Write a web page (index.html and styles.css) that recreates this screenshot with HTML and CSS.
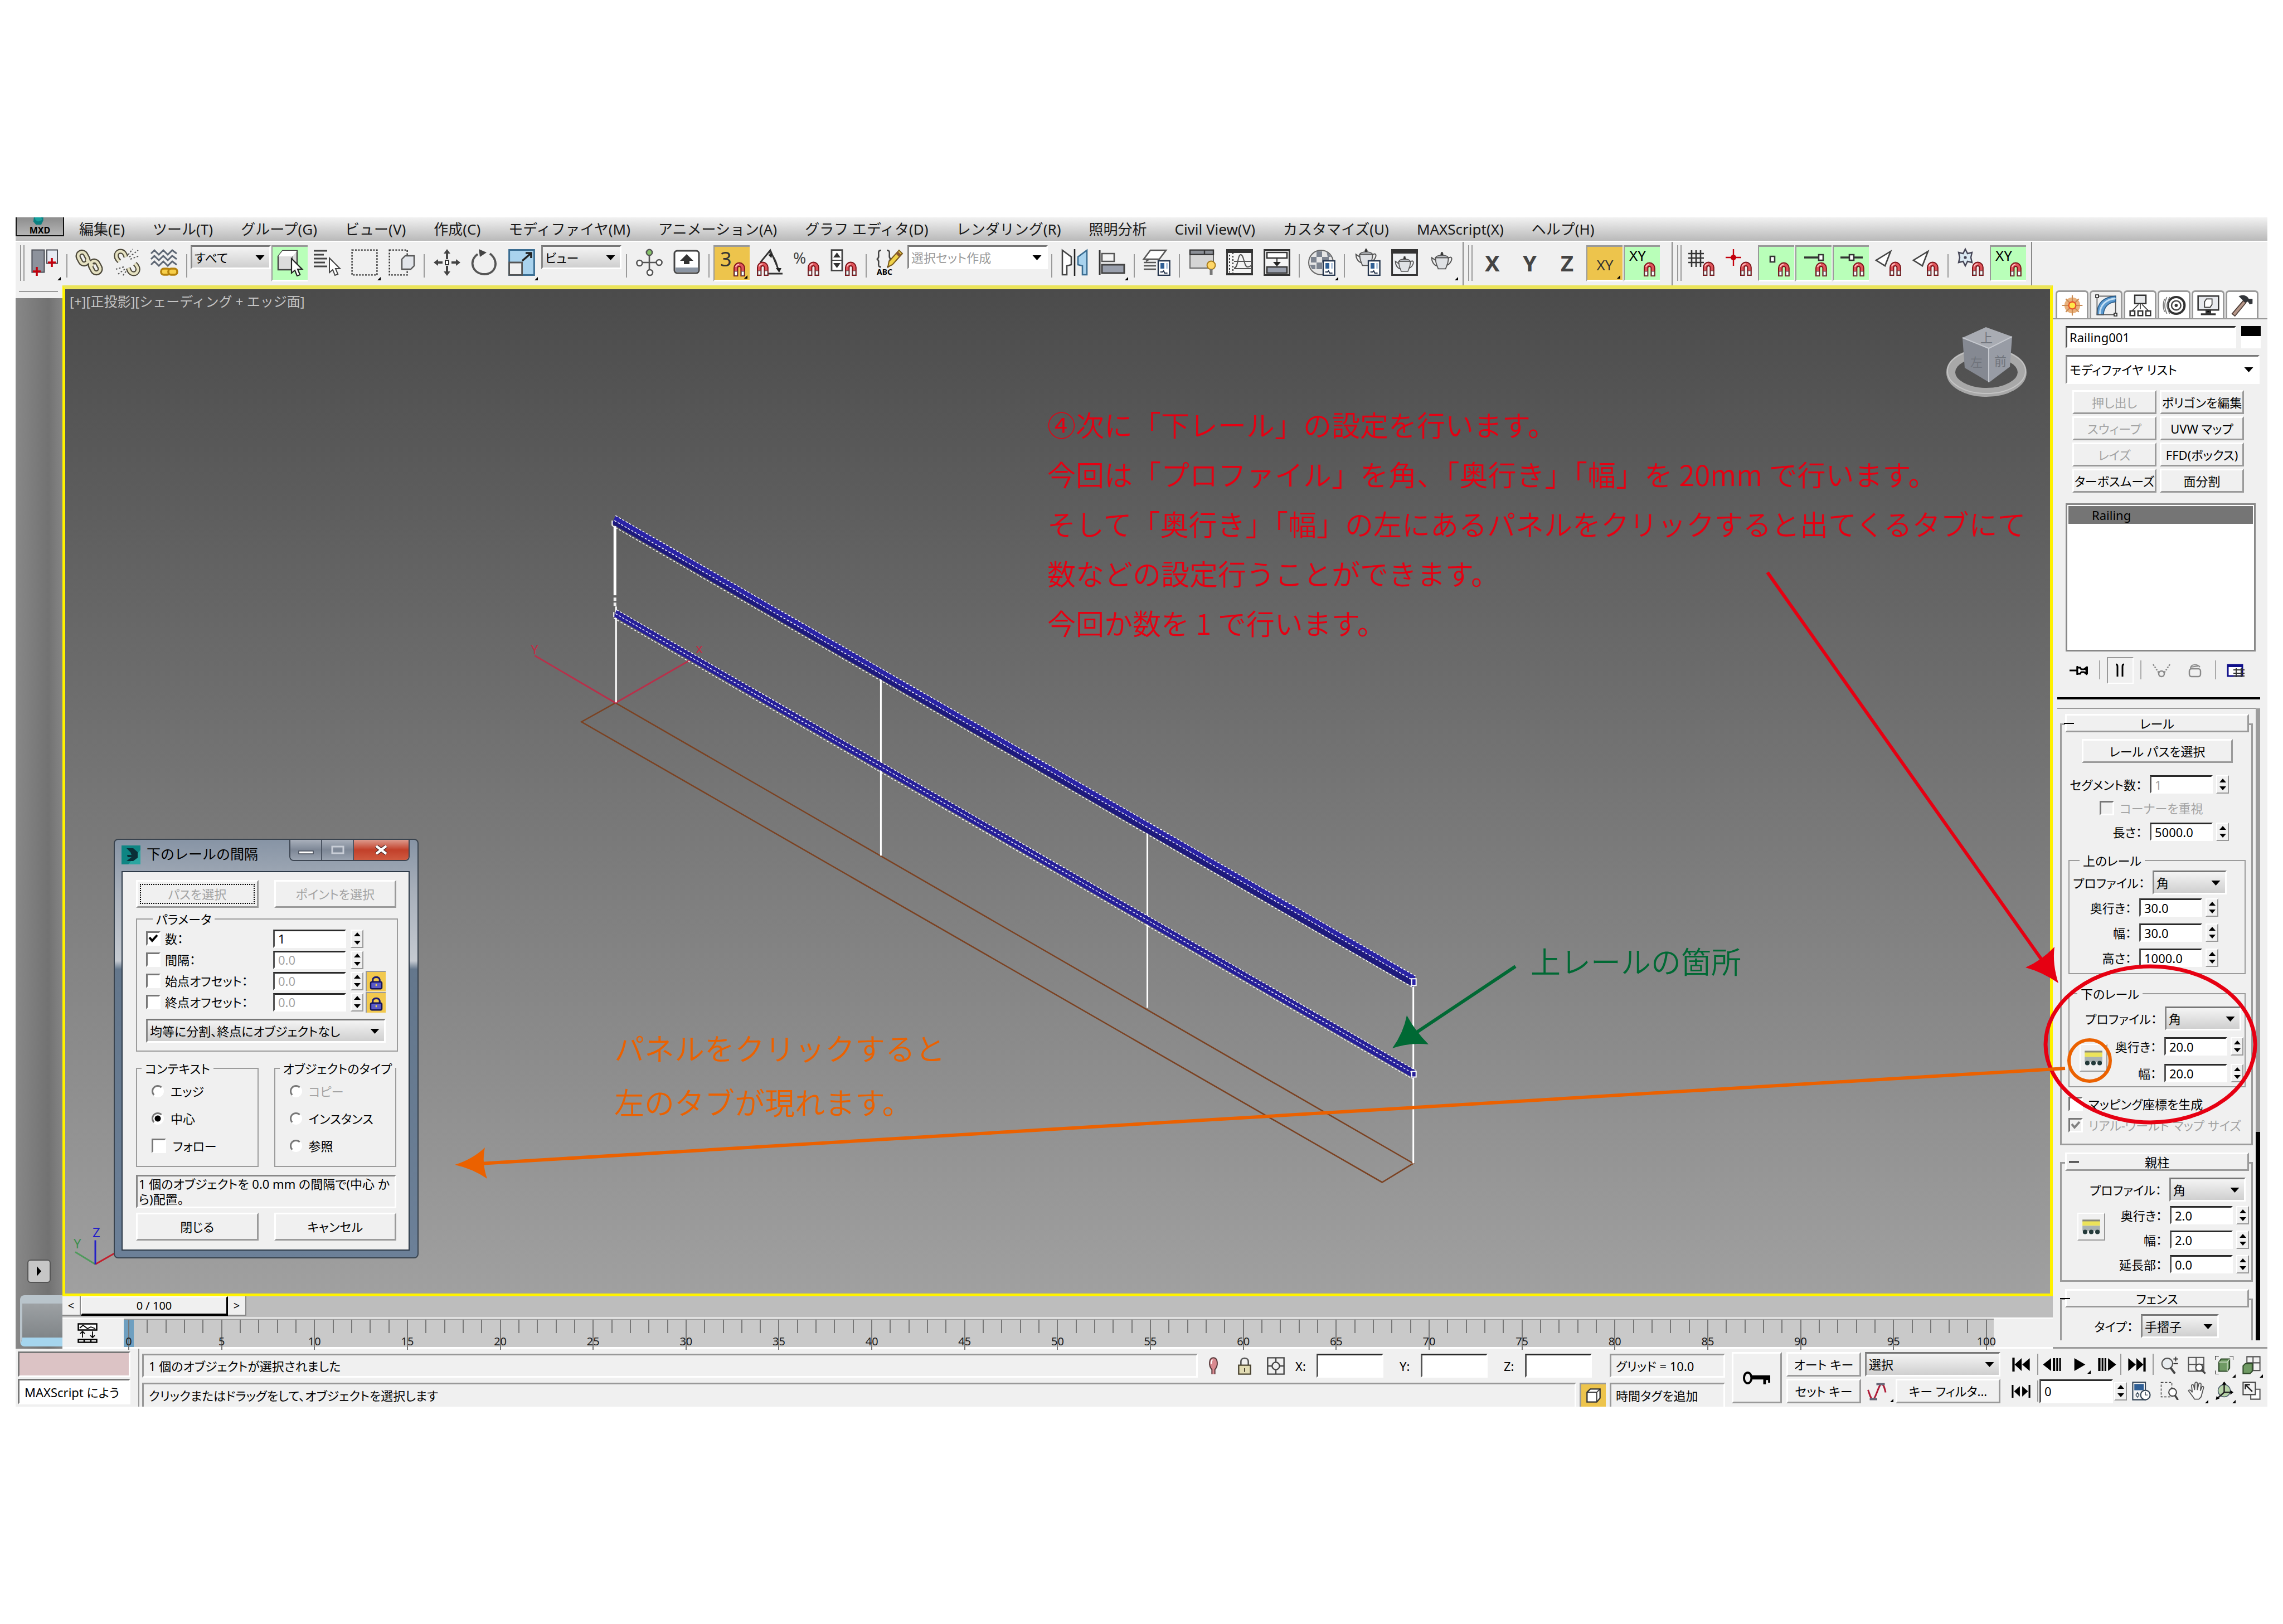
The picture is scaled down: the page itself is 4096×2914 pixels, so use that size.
FILE: index.html
```html
<!DOCTYPE html>
<html lang="ja">
<head>
  <meta charset="UTF-8">
  <meta name="viewport" content="width=device-width, initial-scale=1.0">
  <title>Railing001 - 下のレールの設定</title>
  <link rel="stylesheet" href="styles.css">
</head>
<body>
  <!-- Shared icon parts -->
  <svg class="defs" aria-hidden="true">
    <symbol id="magnet" viewBox="0 0 24 24">
      <path d="M13.5 23.5v-7a4.7 4.7 0 0 1 9.4 0v7h-3.2v-7a1.5 1.5 0 0 0-3 0v7z" fill="#e0555c" stroke="#7c1218" stroke-width="1"/>
      <path d="M14 19.5h2.4v3.6H14zM20.1 19.5h2.4v3.6h-2.4z" fill="#fff" stroke="#555" stroke-width=".5"/>
      <path d="M15 15.5a3.3 3.3 0 0 1 3-2.3" stroke="#ffc4c4" stroke-width="1" fill="none"/>
    </symbol>
    <symbol id="teapot" viewBox="0 0 24 24">
      <path d="M5 8c0 7 3 11 3 12h8c0-1 3-5 3-12z" fill="#dfe1e4" stroke="#555" stroke-width="1.1"/>
      <path d="M5 8h14c-1-2-4-2.600-7-2.600S6 6 5 8z" fill="#b9bcc1" stroke="#555"/>
      <path d="M12 2v3M10.500 4.500h3" stroke="#333" stroke-width="2"/>
      <path d="M5.500 11L1 8c0 4 2 8 6 9M18.500 9c3-3 5-1 3.500 2.500S18 16 17 16" fill="none" stroke="#555" stroke-width="1.200"/>
    </symbol>
    <symbol id="slate" viewBox="0 0 24 24">
      <path d="M13 10.500h10.300v13H13z" fill="#fff" stroke="#25354d" stroke-width="1.200"/>
      <path d="M15 12.500h3.500v5H15z" fill="#2f5f95"/>
      <path d="M20 12.500h1.800v5H20z" fill="#b8cbe2"/>
      <path d="M14.800 20.500h2l1-1 1 2h2.500" stroke="#25354d" fill="none"/>
    </symbol>
    <symbol id="cursor" viewBox="0 0 24 24">
      <path d="M13 8v13l3-2.500 2 5 2.600-1-2.100-5h4z" fill="#fff" stroke="#222" stroke-width="1.100"/>
    </symbol>
    <symbol id="spacing" viewBox="0 0 24 24">
      <path d="M2 4h20v3H2z" fill="#8a8a7a"/><path d="M2 6h20v5H2z" fill="#ece35a"/><path d="M2 11h20v6H2z" fill="#aab2b2"/>
      <circle cx="5" cy="18" r="2.600" fill="#243a3a"/><circle cx="12" cy="18" r="2.600" fill="#243a3a"/><circle cx="19" cy="18" r="2.600" fill="#243a3a"/>
    </symbol>
    <symbol id="padlock" viewBox="0 0 24 24">
      <path d="M7 12V8c0-5 10-5 10 0v4" fill="none" stroke="#191970" stroke-width="2.500"/>
      <rect x="4" y="11" width="16" height="10" rx="2" fill="#5a5ac8" stroke="#14145a" stroke-width="2"/>
      <path d="M12 14v3" stroke="#e8d050" stroke-width="2"/>
    </symbol>
  </svg>

  <main class="app">
    <!-- Menu bar -->
    <nav class="menubar">
      <button class="app-button" aria-label="MXD">
        <svg viewBox="0 0 40 16"><path d="M8 0h18v6l-4 8H12L7 8z" fill="#0c7f80"/><path d="M10 0h12l2 5-8 3-5-3z" fill="#18a29f"/></svg>
        MXD
      </button>
      <a href="#">編集(E)</a>
      <a href="#">ツール(T)</a>
      <a href="#">グループ(G)</a>
      <a href="#">ビュー(V)</a>
      <a href="#">作成(C)</a>
      <a href="#">モディファイヤ(M)</a>
      <a href="#">アニメーション(A)</a>
      <a href="#">グラフ エディタ(D)</a>
      <a href="#">レンダリング(R)</a>
      <a href="#">照明分析</a>
      <a href="#">Civil View(V)</a>
      <a href="#">カスタマイズ(U)</a>
      <a href="#">MAXScript(X)</a>
      <a href="#">ヘルプ(H)</a>
    </nav>

    <!-- Toolbars -->
    <div class="toolbars">
      <div class="toolbar">
        <button class="tool fly" aria-label="元に戻す"><svg viewBox="0 0 24 24"><path d="M.700.700h11v20h-11z" fill="#8d929c" stroke="#4a4d55"/><path d="M14 .700h9.500v12H14z" fill="#e6eaf2" stroke="#4a4d55"/><path d="M5 16v8M1.500 20h7M18.500 8v8M15 12h7" stroke="#c4000c" stroke-width="1.800"/></svg></button>
        <i class="sep"></i>
        <button class="tool" aria-label="リンク"><svg viewBox="0 0 24 24" fill="none"><g stroke="#4b4738" stroke-width="4.600"><rect x="2.500" y="2.500" width="7" height="11" rx="3.500" transform="rotate(-28 6 8)"/><rect x="13.500" y="10.500" width="7" height="11" rx="3.500" transform="rotate(-28 17 16)"/><path d="M9 9l6 6"/></g><g stroke="#e6e2c2" stroke-width="2.400"><rect x="2.500" y="2.500" width="7" height="11" rx="3.500" transform="rotate(-28 6 8)"/><rect x="13.500" y="10.500" width="7" height="11" rx="3.500" transform="rotate(-28 17 16)"/><path d="M9 9l6 6"/></g></svg></button>
        <button class="tool" aria-label="リンク解除"><svg viewBox="0 0 24 24" fill="none"><g stroke="#4b4738" stroke-width="4.400"><path d="M5 11C0 6 3 2 6 2s4 2 5 5M19 13c5 5 2 9-1 9s-4-2-5-5"/></g><g stroke="#e6e2c2" stroke-width="2.300"><path d="M5 11C0 6 3 2 6 2s4 2 5 5M19 13c5 5 2 9-1 9s-4-2-5-5"/></g><path d="M14 7l8-6M15 9l8-3M13 5l4-5M9 16l-7 2M10 18l-7 5M11 20l-3 4" stroke="#555" stroke-dasharray="1.500 1.500"/></svg></button>
        <button class="tool" aria-label="スペース ワープにバインド"><svg viewBox="0 0 24 24" fill="none"><path d="M0 4l3-3 4 4 4-4 4 4 4-4 4 3M0 9l3-3 4 4 4-4 4 4 4-4 4 3M0 14l3-3 4 4 4-4 4 4 4-4 4 3" stroke="#5d6673" stroke-width="1.500"/><rect x="9" y="17.500" width="8" height="5.500" rx="2.500" stroke="#b5820c" stroke-width="1.800" fill="#f7cf4a"/><rect x="15.500" y="17.500" width="8" height="5.500" rx="2.500" stroke="#b5820c" stroke-width="1.800" fill="#f7cf4a"/></svg></button>
        <i class="sep"></i>
        <select class="combo" aria-label="選択フィルタ"><option>すべて</option></select>
        <button class="tool on-green" aria-label="オブジェクトを選択"><svg viewBox="0 0 24 24"><path d="M1 6l4-5h13v12l-4 5H1z" fill="#dcdcdc" stroke="#444" stroke-width="1.200"/><path d="M1 6l4-5h13l-4 5z" fill="#fff"/><path d="M14 6v12" stroke="#888"/><use href="#cursor"/></svg></button>
        <button class="tool" aria-label="名前で選択"><svg viewBox="0 0 24 24"><path d="M0 1.500h12M0 5h9M0 8.500h12M0 12h10M0 15.500h12" stroke="#444" stroke-width="1.500"/><path d="M14 8v13l3-2.500 2 5 2.600-1-2.100-5h4z" fill="#fff" stroke="#444"/></svg></button>
        <button class="tool fly" aria-label="矩形選択領域"><svg viewBox="0 0 24 24"><path d="M.800.800h22.400v22.400H.800z" fill="none" stroke="#333" stroke-width="1.200" stroke-dasharray="1.500 1.200"/></svg></button>
        <button class="tool" aria-label="ウィンドウ/交差"><svg viewBox="0 0 24 24"><path d="M.800.800h16v22.400H.800z" fill="none" stroke="#333" stroke-width="1.200" stroke-dasharray="1.500 1.200"/><path d="M12 9l3-3h8v9l-3 3h-8z" fill="#e2e5ea" stroke="#555" stroke-width="1.200"/></svg></button>
        <i class="sep"></i>
        <button class="tool" aria-label="選択して移動"><svg viewBox="0 0 24 24"><path d="M12 0l3 4h-2v5h-2V4H9zM12 24l-3-4h2v-5h2v5h2zM0 12l4-3v2h4v2H4v2zM24 12l-4 3v-2h-4v-2h4V9z" fill="#444"/><path d="M10.500 10h3v4h-3z" fill="#fff" stroke="#333"/></svg></button>
        <button class="tool" aria-label="選択して回転"><svg viewBox="0 0 24 24"><path d="M6 4.500C-3 11 2 22.500 12 22.500S26 11 17 4" fill="none" stroke="#555" stroke-width="1.900"/><path d="M7 0l7 3-6 4z" fill="#444"/></svg></button>
        <button class="tool fly" aria-label="選択してスケール"><svg viewBox="0 0 24 24"><path d="M.800.800h22.400v22.400H.800z" fill="#a9d3ee" stroke="#3a6d92" stroke-width="1.500"/><path d="M.800 12h11.500v11.200H.800z" fill="#f0f0f0" stroke="#555" stroke-width="1.400"/><path d="M12.500 10.500L20 4M15.500 3.500H20.500V8" fill="none" stroke="#222" stroke-width="1.800"/></svg></button>
        <select class="combo" aria-label="基準座標系"><option>ビュー</option></select>
        <i class="sep"></i>
        <button class="tool" aria-label="基点中心を使用"><svg viewBox="0 0 24 24" stroke="#555" stroke-width="1.300"><path d="M12 5v14M5 12h14"/><circle cx="12" cy="3" r="2.600" fill="#86c36a"/><circle cx="3.200" cy="12.500" r="2.500" fill="#fff"/><circle cx="20.800" cy="12" r="2.500" fill="#fff"/><circle cx="12.500" cy="21" r="2.500" fill="#fff"/></svg></button>
        <button class="tool" aria-label="マニピュレート"><svg viewBox="0 0 24 24"><rect x="1" y="1.500" width="22" height="20" rx="2.500" fill="#fff" stroke="#444" stroke-width="1.500"/><path d="M2 16.500h20v4H2z" fill="#8b95a3"/><path d="M12 4.500l6 6h-3.500v3h-5v-3H6z" fill="#333"/></svg></button>
        <i class="sep"></i>
        <button class="tool on-gold fly" aria-label="スナップ切り替え"><svg viewBox="0 0 24 24"><text x="1" y="15" class="g20">3</text><use href="#magnet"/></svg></button>
        <button class="tool" aria-label="角度スナップ"><svg viewBox="0 0 24 24"><path d="M4 12L13 1l8 19M11 22h13" fill="none" stroke="#333" stroke-width="1.400"/><path d="M12 3c5 3 7 10 8 15" fill="none" stroke="#333"/><path d="M18 17h5l-2 4zM11 5l4-1-1 4z" fill="#222"/><use href="#magnet" x="-12"/></svg></button>
        <button class="tool" aria-label="パーセント スナップ"><svg viewBox="0 0 24 24"><text x="0" y="13" class="g17">%</text><use href="#magnet"/></svg></button>
        <button class="tool" aria-label="スピナー スナップ"><svg viewBox="0 0 24 24"><path d="M1 .800h9.500v18.400H1z" fill="#fff" stroke="#444" stroke-width="1.400"/><path d="M1 10h9.500" stroke="#444"/><path d="M5.800 3l3.200 4.500H2.500zM5.800 17l3.200-4.500H2.500z" fill="#333"/><use href="#magnet"/></svg></button>
        <i class="sep"></i>
        <button class="tool" aria-label="名前付き選択セットを編集"><svg viewBox="0 0 24 24"><path d="M5 1C0 1 5 8 1 9c4 1-1 7 4 7M10 1c5 0 0 7 4 8-4 1 1 7-4 7" fill="none" stroke="#444" stroke-width="1.300"/><path d="M21 1l3 3-9 10-4 2 1-5z" fill="#f0d24a" stroke="#7a5a1a"/><path d="M20 2l3 3-2 2-3-3z" fill="#8a5a30"/><text x="1" y="23" class="g8">ABC</text></svg></button>
        <select class="combo set" aria-label="名前付き選択セット"><option>選択セット作成</option></select>
        <i class="sep"></i>
        <button class="tool" aria-label="ミラー"><svg viewBox="0 0 24 24"><path d="M12 0v24" stroke="#222" stroke-width="1.300"/><path d="M1 1l8 6v7l-4 1v8H1z" fill="#fff" stroke="#444" stroke-width="1.300"/><path d="M23 1l-8 6v7l4 1v8h4z" fill="#a9d3ee" stroke="#3a6d92" stroke-width="1.300"/></svg></button>
        <button class="tool fly" aria-label="位置合わせ"><svg viewBox="0 0 24 24"><path d="M1 1v22" stroke="#333" stroke-width="1.500"/><path d="M3 4h11v7H3z" fill="#f4f4f4" stroke="#555" stroke-width="1.300"/><path d="M3 14h20v7.500H3z" fill="#9aa0ad" stroke="#444" stroke-width="1.500"/></svg></button>
        <i class="sep"></i>
        <button class="tool" aria-label="レイヤ マネージャ"><svg viewBox="0 0 24 24"><path d="M6 1h14l-6 8H0zM0 12h11M0 15h11M0 18h11M2 11l3-2" fill="#fff" stroke="#555" stroke-width="1.300"/><use href="#slate"/></svg></button>
        <i class="sep"></i>
        <button class="tool" aria-label="リボン切り替え"><svg viewBox="0 0 24 24"><path d="M1 4h21v13H1z" fill="#d5d5d5" stroke="#666"/><path d="M1 .800h13v4H1zM14 .800h8v4h-8z" fill="#8b8f96" stroke="#333" stroke-width="1.200"/><circle cx="20" cy="14.500" r="3.700" fill="#ffd767" stroke="#a87a18"/><path d="M20 18v5" stroke="#777" stroke-width="2.500"/></svg></button>
        <button class="tool" aria-label="カーブ エディタ"><svg viewBox="0 0 24 24"><path d="M.800.800h22.400v22H.800z" fill="#f5f5f5" stroke="#333" stroke-width="1.500"/><path d="M0 0h24v3.500H0zM0 21.500h24v2H0z" fill="#333"/><path d="M6 3v19M3 5v16" stroke="#333" stroke-dasharray="1.500 1.500"/><path d="M7 17c4 0 3-12 6-12s3 11 6 11 3-1 4-2M7 11h16M7 17.500h16" fill="none" stroke="#555"/></svg></button>
        <button class="tool" aria-label="スケマティック ビュー"><svg viewBox="0 0 24 24"><path d="M.800.800h22.400v22.400H.800z" fill="#f5f5f5" stroke="#333" stroke-width="1.500"/><path d="M3 3h18v5H3z" fill="#fff" stroke="#333" stroke-width="1.300"/><path d="M3 16h18v5.500H3z" fill="#9aa0ad" stroke="#333" stroke-width="1.300"/><path d="M12 8v5" stroke="#333"/><path d="M8.500 11.500h7L12 15.500z" fill="#222"/></svg></button>
        <i class="sep"></i>
        <button class="tool fly" aria-label="マテリアル エディタ"><svg viewBox="0 0 24 24"><circle cx="11" cy="12" r="11" fill="#e6e6e6" stroke="#666"/><path d="M7 2h5v5H7zM2 7h5v5H2zM12 7h6v5h-6zM7 12h5v6H7zM16 2l4 5h-3zM1 14h5v4H3z" fill="#7d8490"/><use href="#slate"/></svg></button>
        <i class="sep"></i>
        <button class="tool" aria-label="レンダリング設定"><svg viewBox="0 0 24 24"><use href="#teapot" y="-2" width="22" height="20"/><use href="#slate"/></svg></button>
        <button class="tool" aria-label="レンダー フレーム ウィンドウ"><svg viewBox="0 0 24 24"><path d="M.800.800h22.400v22.400H.800z" fill="#eef0f2" stroke="#333" stroke-width="1.500"/><path d="M0 0h24v4H0z" fill="#333"/><use href="#teapot" x="2" y="5" width="20" height="18"/></svg></button>
        <button class="tool fly" aria-label="レンダリング"><svg viewBox="0 0 24 24"><use href="#teapot" x="1" y="1" width="22" height="20"/></svg></button>
      </div>
      <div class="toolbar axes">
        <button class="tool letter">X</button>
        <button class="tool letter">Y</button>
        <button class="tool letter">Z</button>
        <button class="tool on-gold fly xy">XY</button>
        <button class="tool on-green" aria-label="XY スナップ"><svg viewBox="0 0 24 24"><text x="0" y="10" class="g12">XY</text><use href="#magnet"/></svg></button>
      </div>
      <div class="toolbar snaps">
        <button class="tool" aria-label="グリッド スナップ"><svg viewBox="0 0 24 24"><path d="M3 1v15M7 1v15M11 1v15M0 4h14M0 8h14M0 12h14" stroke="#333" stroke-width="1.300"/><use href="#magnet"/></svg></button>
        <button class="tool" aria-label="基点スナップ"><svg viewBox="0 0 24 24"><path d="M7 0v15M0 7.500h14" stroke="#c4000c" stroke-width="1.200"/><circle cx="7" cy="7.500" r="2.500" fill="#c4000c"/><use href="#magnet"/></svg></button>
        <button class="tool on-green" aria-label="頂点スナップ"><svg viewBox="0 0 24 24"><path d="M6 6h4v5H6z" fill="#fff" stroke="#333" stroke-width="1.300"/><use href="#magnet"/></svg></button>
        <button class="tool on-green" aria-label="端点スナップ"><svg viewBox="0 0 24 24"><path d="M3 7h14" stroke="#333" stroke-width="1.800"/><path d="M16 4.500h4v5h-4z" fill="#fff" stroke="#333" stroke-width="1.300"/><use href="#magnet"/></svg></button>
        <button class="tool on-green" aria-label="中点スナップ"><svg viewBox="0 0 24 24"><path d="M2 7h20" stroke="#333" stroke-width="1.800"/><path d="M10 4.500h4v5h-4z" fill="#fff" stroke="#333" stroke-width="1.300"/><use href="#magnet"/></svg></button>
        <button class="tool" aria-label="面スナップ"><svg viewBox="0 0 24 24"><path d="M14 2L1 10l8 5z" fill="#fff" stroke="#444" stroke-width="1.300"/><use href="#magnet"/></svg></button>
        <button class="tool" aria-label="面中心スナップ"><svg viewBox="0 0 24 24"><path d="M14 2L1 10l8 5z" fill="#fff" stroke="#444" stroke-width="1.300"/><use href="#magnet"/></svg></button>
        <i class="sep"></i>
        <button class="tool" aria-label="フリーズ スナップ"><svg viewBox="0 0 24 24"><path d="M7 0l2 4 4-1-1 4.500 1 4.500-4-1-2 4-2-4-4 1 1-4.500L1 3l4 1z" fill="#dbe9f2" stroke="#445" stroke-width="1.200"/><circle cx="7" cy="7.500" r="1.300" fill="#445"/><use href="#magnet"/></svg></button>
        <button class="tool on-green" aria-label="軸拘束スナップ"><svg viewBox="0 0 24 24"><text x="0" y="10" class="g12">XY</text><use href="#magnet"/></svg></button>
      </div>
    </div>

    <div class="workspace">
      <!-- Viewport layout bar -->
      <aside class="layoutbar">
        <div class="grip"></div>
        <button class="expand" aria-label="レイアウト タブを展開"></button>
        <button class="layout-tab" aria-label="ビューポート レイアウト"></button>
      </aside>

      <div class="center">
        <section class="viewport">
          <svg class="scene" viewBox="117 519 3560 1801" aria-label="手すりのモデル">
            <!-- Floor outline and gizmo -->
            <path d="M1104 1261L1043 1295L2479 2121L2535 2087Z" fill="none" stroke="#7b4222" stroke-width="2.500"/>
            <path d="M959 1176L1104 1261L1245 1180" fill="none" stroke="#b8304a" stroke-width="3"/>
            <text x="952" y="1174" class="axis red">Y</text>
            <text x="1248" y="1172" class="axis red">x</text>
            <!-- Posts -->
            <path d="M1103 944V1068" stroke="#fff" stroke-width="5"/>
            <path d="M1103 1072V1090" stroke="#eee" stroke-width="5" stroke-dasharray="6 3"/>
            <path d="M1105 1088V1260M1580 1217V1535M2058 1494V1808M2535 1761V2087" stroke="#fff" stroke-width="3"/>
            <!-- Top rail -->
            <path d="M1098 940L1104 925L2539 1751L2535 1770Z" fill="#2a23a6"/>
            <path d="M1098 940L1102 934L2537 1760L2535 1771Z" fill="#1e1a7c"/>
            <path d="M1104 925L2539 1751M1102 934L2537 1760M1098 943L2533 1771" fill="none" stroke="#fff" stroke-width="1.500" stroke-dasharray="4 3"/>
            <path d="M1098 934V943M2532 1756h8v12h-8z" fill="#2a23a6" stroke="#fff" stroke-width="2"/>
            <!-- Bottom rail -->
            <path d="M1101 1106L1106 1094L2539 1920L2535 1934Z" fill="#261f98"/>
            <path d="M1106 1094L2539 1920M1104 1101L2537 1927M1101 1109L2533 1935" fill="none" stroke="#fff" stroke-width="1.500" stroke-dasharray="4 3"/>
            <path d="M1101 1098V1107M2532 1922h8v10h-8z" fill="#261f98" stroke="#fff" stroke-width="2"/>
            <!-- World axis -->
            <path d="M171 2268L135 2246" stroke="#4f9a5c" stroke-width="3"/>
            <path d="M171 2268L206 2248" stroke="#c41e2c" stroke-width="3"/>
            <path d="M171 2268V2225" stroke="#2420c8" stroke-width="3"/>
            <text x="166" y="2220" class="axis blue">Z</text>
            <text x="132" y="2240" class="axis green">Y</text>
            <!-- View cube -->
            <ellipse cx="3563" cy="668" rx="64" ry="36" fill="none" stroke="#a8a8a8" stroke-width="16"/>
            <ellipse cx="3563" cy="666" rx="70" ry="40" fill="none" stroke="#c4c4c4" stroke-width="2"/>
            <path d="M3520 606L3562 587L3609 604L3567 625Z" fill="#a9acb3"/>
            <path d="M3520 606L3567 625L3568 686L3524 660Z" fill="#858992"/>
            <path d="M3567 625L3609 604L3605 658L3568 686Z" fill="#989ca5"/>
            <path d="M3520 606L3567 625L3609 604M3567 625V686" fill="none" stroke="#c6c9cf" stroke-width="2"/>
            <text x="3552" y="614" class="cube">上</text>
            <text x="3534" y="658" class="cube">左</text>
            <text x="3577" y="656" class="cube">前</text>
          </svg>

          <p class="view-label">[+][正投影][シェーディング + エッジ面]</p>

          <div class="note red">
            <p>④次に「下レール」の設定を行います。</p>
            <p>今回は「プロファイル」を角、「奥行き」「幅」を 20mm で行います。</p>
            <p>そして「奥行き」「幅」の左にあるパネルをクリックすると出てくるタブにて</p>
            <p>数などの設定行うことができます。</p>
            <p>今回か数を 1 で行います。</p>
          </div>
          <p class="note green">上レールの箇所</p>
          <div class="note orange">
            <p>パネルをクリックすると</p>
            <p>左のタブが現れます。</p>
          </div>

          <!-- Spacing dialog -->
          <form class="dialog">
            <header>
              <svg class="logo" viewBox="0 0 34 34"><rect width="34" height="34" fill="#2aa5a0"/><path d="M0 0h34v8L12 34H0z" fill="#0e8583"/><path d="M9 5h12l8 7v10l-8 6H9l9-7h-7l-1-4h8l-2-5z" fill="#0a2e36"/></svg>
              <h2>下のレールの間隔</h2>
              <div class="window-buttons">
                <button type="button" aria-label="最小化"><svg viewBox="0 0 30 18"><path d="M2 11h26v5H2z" fill="#fff" stroke="#444b58" stroke-width="1.500"/></svg></button>
                <button type="button" aria-label="最大化"><svg viewBox="0 0 30 18"><path d="M5 3h20v12H5z" fill="none" stroke="#c8cdd6" stroke-width="3"/></svg></button>
                <button type="button" class="close" aria-label="閉じる"><svg viewBox="0 0 30 18"><path d="M6 2l18 14M24 2L6 16" stroke="#4a2a2a" stroke-width="7"/><path d="M6 2l18 14M24 2L6 16" stroke="#fff" stroke-width="4.500"/></svg></button>
              </div>
            </header>
            <div class="client">
              <div class="pair">
                <button type="button" class="btn focus" disabled>パスを選択</button>
                <button type="button" class="btn" disabled>ポイントを選択</button>
              </div>
              <fieldset class="params">
                <legend>パラメータ</legend>
                <div class="param"><label><input type="checkbox" checked>数：</label><input type="text" value="1" aria-label="数"><span class="spin"><button type="button" aria-label="増"></button><button type="button" aria-label="減"></button></span></div>
                <div class="param"><label><input type="checkbox">間隔：</label><input type="text" value="0.0" disabled aria-label="間隔"><span class="spin"><button type="button" aria-label="増"></button><button type="button" aria-label="減"></button></span></div>
                <div class="param"><label><input type="checkbox">始点オフセット：</label><input type="text" value="0.0" disabled aria-label="始点オフセット"><span class="spin"><button type="button" aria-label="増"></button><button type="button" aria-label="減"></button></span><button type="button" class="lock" aria-label="始点をロック"><svg viewBox="0 0 24 24"><use href="#padlock"/></svg></button></div>
                <div class="param"><label><input type="checkbox">終点オフセット：</label><input type="text" value="0.0" disabled aria-label="終点オフセット"><span class="spin"><button type="button" aria-label="増"></button><button type="button" aria-label="減"></button></span><button type="button" class="lock" aria-label="終点をロック"><svg viewBox="0 0 24 24"><use href="#padlock"/></svg></button></div>
                <select class="combo" aria-label="分布"><option>均等に分割、終点にオブジェクトなし</option></select>
              </fieldset>
              <div class="pair">
                <fieldset class="choices">
                  <legend>コンテキスト</legend>
                  <label><input type="radio" name="context">エッジ</label>
                  <label><input type="radio" name="context" checked>中心</label>
                  <label><input type="checkbox">フォロー</label>
                </fieldset>
                <fieldset class="choices">
                  <legend>オブジェクトのタイプ</legend>
                  <label class="off"><input type="radio" name="type" disabled>コピー</label>
                  <label><input type="radio" name="type">インスタンス</label>
                  <label><input type="radio" name="type">参照</label>
                </fieldset>
              </div>
              <output class="summary">1 個のオブジェクトを 0.0 mm の間隔で(中心 か<br>ら)配置。</output>
              <div class="pair">
                <button type="button" class="btn">閉じる</button>
                <button type="button" class="btn">キャンセル</button>
              </div>
            </div>
          </form>
        </section>

        <!-- Time slider and track bar -->
        <div class="time-slider">
          <button class="step">&lt;</button>
          <button class="thumb">0 / 100</button>
          <button class="step">&gt;</button>
        </div>
        <div class="trackbar">
          <button class="mini-curve" aria-label="ミニ カーブ エディタを開く"><svg viewBox="0 0 36 36"><path d="M1.500 1.500h33v11h-33z" fill="#fff" stroke="#000" stroke-width="2.500"/><path d="M4 9l6-5 8 6 6-3 8 3" fill="none" stroke="#000" stroke-width="1.800"/><path d="M9 26V16M5 19l4-4 4 4M27 15v10M23 22l4 4 4-4" fill="none" stroke="#000" stroke-width="1.800"/><path d="M1.500 29.500h33v5h-33zM12 30v5M24 30v5" fill="#fff" stroke="#000" stroke-width="2.500"/></svg></button>
          <div class="track">
            <div class="ruler" id="ruler"></div>
          </div>
        </div>
      </div>

      <!-- Command panel -->
      <aside class="panel">
        <div class="tabs">
          <button aria-label="作成"><svg viewBox="0 0 24 24"><circle cx="12" cy="12" r="8.500" fill="#e9b07a"/><path d="M12 1v22M1 12h22M5 5l14 14M19 5L5 19" stroke="#c98a52" stroke-width="1.300"/><circle cx="12" cy="12" r="4.500" fill="#e8502a"/><circle cx="12" cy="12" r="3.200" fill="#ffe84a"/></svg></button>
          <button class="active" aria-label="修正"><svg viewBox="0 0 24 24"><path d="M2 2h20v20" fill="none" stroke="#555"/><path d="M2 22C2 8 10 3 22 2v6C14 9 9 14 9 22z" fill="#5b9ad0" stroke="#2a5d8c"/><path d="M5 22C5 11 12 5.500 22 4.500" fill="none" stroke="#c4e0f5" stroke-width="1.800"/><path d="M2 3v19h19" fill="none" stroke="#555"/><path d="M.600.600h3v3h-3zM20.400 20.400h3v3h-3z" fill="#fff" stroke="#222"/></svg></button>
          <button aria-label="階層"><svg viewBox="0 0 24 24"><path d="M6 1h12v9H6z" fill="#e6e8ea" stroke="#333" stroke-width="1.500"/><path d="M12 10v6M10 11l-7 7M14 11l7 7" stroke="#333"/><path d="M1 18h5v5H1zM9.500 18h5v5h-5zM18 18h5v5h-5z" fill="#fff" stroke="#333" stroke-width="1.500"/></svg></button>
          <button aria-label="モーション"><svg viewBox="0 0 24 24" fill="none"><circle cx="14" cy="12" r="9" stroke="#333" stroke-width="2.500"/><circle cx="14" cy="12" r="5" stroke="#444" stroke-width="1.500"/><circle cx="14" cy="12" r="1.700" fill="#333"/><path d="M4 3c-3 6-3 12 0 18M1.500 5c-2 5-2 9 0 14M7 3c-3 6-3 12 0 18" stroke="#777"/></svg></button>
          <button aria-label="表示"><svg viewBox="0 0 24 24"><path d="M1 2h22v15H1z" fill="#e8eaee" stroke="#333" stroke-width="1.500"/><path d="M8 8l2-3h6v6l-2 3H8z" fill="#fff" stroke="#333"/><path d="M10 17h4v3h-4zM4 21.500h16" stroke="#333" stroke-width="2"/></svg></button>
          <button aria-label="ユーティリティ"><svg viewBox="0 0 24 24"><path d="M13 7L1 21l3 2.500L16 9z" fill="#b59688" stroke="#4a3a34"/><path d="M8 2c5-2 9-1 11 3h4v5l-3 1-2-3-3 1-4-4z" fill="#33363a"/></svg></button>
        </div>

        <div class="panel-head">
          <div class="name-row">
            <input type="text" value="Railing001" aria-label="オブジェクト名">
            <button class="swatch" aria-label="オブジェクト カラー"></button>
          </div>
          <select class="combo white" aria-label="モディファイヤ リスト"><option>モディファイヤ リスト</option></select>
          <div class="modifier-buttons">
            <button class="btn" disabled>押し出し</button>
            <button class="btn">ポリゴンを編集</button>
            <button class="btn" disabled>スウィープ</button>
            <button class="btn">UVW マップ</button>
            <button class="btn" disabled>レイズ</button>
            <button class="btn">FFD(ボックス)</button>
            <button class="btn">ターボスムーズ</button>
            <button class="btn">面分割</button>
          </div>
          <ul class="stack"><li>Railing</li></ul>
          <div class="stack-tools">
            <button aria-label="スタックを固定"><svg viewBox="0 0 34 24"><path d="M0 12h14M14 4v16" stroke="#000" stroke-width="3"/><path d="M14 7h5l2 3h5l4-3v11l-4-3h-5l-2 3h-5z" fill="#fff" stroke="#000" stroke-width="3"/><path d="M31 5v14" stroke="#000" stroke-width="4"/></svg></button>
            <i></i>
            <button class="pressed" aria-label="最終結果を表示"><svg viewBox="0 0 34 24"><path d="M9 1c3 0 3 2 3 5v17M24 1c-3 0-3 2-3 5v17" fill="none" stroke="#000" stroke-width="3"/></svg></button>
            <i></i>
            <button aria-label="固有にする"><svg viewBox="0 0 34 24"><path d="M2 1l10 15M32 1L22 16" stroke="#8a8a8a" stroke-width="2.500" stroke-dasharray="3 2"/><circle cx="17" cy="18" r="5" fill="none" stroke="#8a8a8a" stroke-width="2.500"/></svg></button>
            <button aria-label="モディファイヤを除去"><svg viewBox="0 0 34 24"><rect x="7" y="9" width="20" height="14" rx="4" fill="none" stroke="#8a8a8a" stroke-width="2.500"/><path d="M9 9c0-9 12-9 17-3M9 6l14-2" fill="none" stroke="#8a8a8a" stroke-width="2"/></svg></button>
            <i></i>
            <button aria-label="モディファイヤ セットを設定"><svg viewBox="0 0 34 24"><path d="M2 2h26v20H2z" fill="#fff" stroke="#10108a" stroke-width="3"/><path d="M1 1h28v5H1z" fill="#10108a"/><path d="M12 11h20M12 17h20M12 22h20M17 8v16M26 8v16" stroke="#333" stroke-width="2"/></svg></button>
          </div>
        </div>

        <div class="rollups">
          <div class="rollup-list">
            <section class="rollup">
              <h3>レール</h3>
              <button class="btn path">レール パスを選択</button>
              <div class="row a"><label for="seg">セグメント数：</label><input type="text" id="seg" value="1" disabled><span class="spin"><button aria-label="増"></button><button aria-label="減"></button></span></div>
              <label class="check inset off"><input type="checkbox" disabled>コーナーを重視</label>
              <div class="row a"><label for="len">長さ：</label><input type="text" id="len" value="5000.0"><span class="spin"><button aria-label="増"></button><button aria-label="減"></button></span></div>
              <fieldset>
                <legend>上のレール</legend>
                <div class="row b"><label for="top-profile">プロファイル：</label><select class="combo" id="top-profile"><option>角</option></select></div>
                <div class="row c"><label for="top-depth">奥行き：</label><input type="text" id="top-depth" value="30.0"><span class="spin"><button aria-label="増"></button><button aria-label="減"></button></span></div>
                <div class="row c"><label for="top-width">幅：</label><input type="text" id="top-width" value="30.0"><span class="spin"><button aria-label="増"></button><button aria-label="減"></button></span></div>
                <div class="row c"><label for="top-height">高さ：</label><input type="text" id="top-height" value="1000.0"><span class="spin"><button aria-label="増"></button><button aria-label="減"></button></span></div>
              </fieldset>
              <fieldset class="lower">
                <legend>下のレール</legend>
                <div class="row"><label for="low-profile">プロファイル：</label><select class="combo" id="low-profile"><option>角</option></select></div>
                <div class="with-icon">
                  <button class="icon-btn" aria-label="下のレールの間隔"><svg viewBox="0 0 24 24"><use href="#spacing"/></svg></button>
                  <div>
                    <div class="row"><label for="low-depth">奥行き：</label><input type="text" id="low-depth" value="20.0"><span class="spin"><button aria-label="増"></button><button aria-label="減"></button></span></div>
                    <div class="row"><label for="low-width">幅：</label><input type="text" id="low-width" value="20.0"><span class="spin"><button aria-label="増"></button><button aria-label="減"></button></span></div>
                  </div>
                </div>
              </fieldset>
              <label class="check"><input type="checkbox">マッピング座標を生成</label>
              <label class="check off"><input type="checkbox" checked disabled>リアル-ワールド マップ サイズ</label>
            </section>
            <section class="rollup posts">
              <h3>親柱</h3>
              <div class="row"><label for="post-profile">プロファイル：</label><select class="combo" id="post-profile"><option>角</option></select></div>
              <div class="with-icon">
                <button class="icon-btn" aria-label="親柱の間隔"><svg viewBox="0 0 24 24"><use href="#spacing"/></svg></button>
                <div>
                  <div class="row"><label for="post-depth">奥行き：</label><input type="text" id="post-depth" value="2.0"><span class="spin"><button aria-label="増"></button><button aria-label="減"></button></span></div>
                  <div class="row"><label for="post-width">幅：</label><input type="text" id="post-width" value="2.0"><span class="spin"><button aria-label="増"></button><button aria-label="減"></button></span></div>
                  <div class="row"><label for="post-ext">延長部：</label><input type="text" id="post-ext" value="0.0"><span class="spin"><button aria-label="増"></button><button aria-label="減"></button></span></div>
                </div>
              </div>
            </section>
            <section class="rollup fence">
              <h3>フェンス</h3>
              <div class="row c"><label for="fence-type">タイプ：</label><select class="combo" id="fence-type"><option>手摺子</option></select></div>
            </section>
          </div>
          <div class="scroll"></div>
        </div>
      </aside>
    </div>

    <!-- Status bar -->
    <footer class="status">
      <div class="listener">
        <input type="text" class="pink" aria-label="マクロ レコーダ">
        <input type="text" value="MAXScript によう" aria-label="リスナー">
      </div>
      <div class="messages">
        <div class="line">
          <p class="box">1 個のオブジェクトが選択されました</p>
          <div class="glyphs">
            <button aria-label="選択を分離"><svg viewBox="0 0 24 24"><path d="M10 23v-6C5 11 6 1 12 1s7 10 2 16v6" fill="#d98a90" stroke="#5a3a3c" stroke-width="1.500"/><path d="M9 9c0-3 1-5 2-5" stroke="#fff" stroke-width="1.500" fill="none"/></svg></button>
            <button aria-label="選択をロック"><svg viewBox="0 0 24 24"><path d="M7 11V6c0-6 10-6 10 0v5" fill="none" stroke="#555" stroke-width="2"/><path d="M4 11h16v12H4z" fill="#e2dcb4" stroke="#4a4430" stroke-width="1.800"/><path d="M12 15v5" stroke="#4a4430" stroke-width="1.500"/></svg></button>
            <button aria-label="絶対モード"><svg viewBox="0 0 24 24"><path d="M1 1h22v22H1zM12 1v22M1 12h22" fill="none" stroke="#444" stroke-width="1.800"/><circle cx="12" cy="12" r="5" fill="#f0f0f0" stroke="#444" stroke-width="1.800"/></svg></button>
          </div>
          <label class="coord">X: <input type="text"></label>
          <label class="coord">Y: <input type="text"></label>
          <label class="coord">Z: <input type="text"></label>
          <p class="box side">グリッド = 10.0</p>
        </div>
        <div class="line second">
          <p class="box">クリックまたはドラッグをして、オブジェクトを選択します</p>
          <button class="comm" aria-label="コミュニケーション センター"><svg viewBox="0 0 24 24"><path d="M2 7l5-5h15v14l-5 6H2z" fill="#fff" stroke="#333" stroke-width="2"/><path d="M2 7h15v15M17 7l5-5" fill="none" stroke="#333" stroke-width="1.500"/></svg></button>
          <p class="box side tag">時間タグを追加</p>
        </div>
      </div>
      <button class="btn key" aria-label="キーを設定"><svg viewBox="0 0 52 28"><ellipse cx="9" cy="14" rx="7" ry="10" fill="none" stroke="#000" stroke-width="4"/><path d="M16 9h35v14h-4v-5h-4v8h-5v-9H16z"/></svg></button>
      <div class="keys">
        <button class="btn">オート キー</button>
        <button class="btn">セット キー</button>
      </div>
      <div class="filters">
        <select class="combo" aria-label="選択リスト"><option>選択</option></select>
        <div>
          <button class="curve fly" aria-label="接線タイプ"><svg viewBox="0 0 24 24"><path d="M1 10c2 5 3 11 6 11S14 3 17 3s4 6 5 10" fill="none" stroke="#b01c38" stroke-width="2"/><path d="M11 3h10M3 21h9" stroke="#667" stroke-width="2.500"/></svg></button>
          <button class="btn">キー フィルタ...</button>
        </div>
      </div>
      <div class="playback">
        <div>
          <button class="end" aria-label="先頭へ"><svg viewBox="0 0 32 24"><path d="M1 0h4v24H1zM17 1v22L5 12zM31 1v22L18 12z"/></svg></button>
          <button aria-label="前のフレーム"><svg viewBox="0 0 32 24"><path d="M14 1v22L0 12zM17 1h4v22h-4zM23 1h3v22h-3zM28 1h3v22h-3z"/></svg></button>
          <button class="fly" aria-label="再生"><svg viewBox="0 0 32 24"><path d="M7 1l19 11L7 23z"/></svg></button>
          <button aria-label="次のフレーム"><svg viewBox="0 0 32 24"><path d="M18 1v22l14-11zM1 1h4v22H1zM7 1h3v22H7zM12 1h3v22h-3z"/></svg></button>
          <button class="end" aria-label="末尾へ"><svg viewBox="0 0 32 24"><path d="M27 0h4v24h-4zM1 1v22l13-11zM15 1v22l12-11z"/></svg></button>
        </div>
        <div>
          <button class="end" aria-label="キー モード"><svg viewBox="0 0 32 24"><path d="M0 1h3v22H0zM29 1h3v22h-3zM14 3v18L4 12zM18 3v18l10-9z"/></svg></button>
          <input type="text" value="0" aria-label="現在のフレーム">
          <span class="spin"><button aria-label="増"></button><button aria-label="減"></button></span>
          <button class="time-config" aria-label="時間設定"><svg viewBox="0 0 24 24"><path d="M1 1h16v22H1z" fill="#f4f4f4" stroke="#345" stroke-width="1.500"/><path d="M3 3h12v8H3z" fill="#2f5f95"/><circle cx="17" cy="17" r="6" fill="#fff" stroke="#345" stroke-width="1.500"/><path d="M17 13v4h3M5 17l2-3 2 3-2 3z" stroke="#345" fill="none"/></svg></button>
        </div>
      </div>
      <div class="nav">
        <button aria-label="ズーム"><svg viewBox="0 0 24 24"><circle cx="9" cy="10" r="7" fill="#e9edf0" stroke="#555" stroke-width="1.500"/><path d="M13 15l6 8" stroke="#444" stroke-width="3"/><path d="M20 1v6M17 4h6M17 10h6" stroke="#333" stroke-width="1.300"/></svg></button>
        <button aria-label="すべてズーム"><svg viewBox="0 0 24 24"><path d="M1 2h20v18H1zM11 2v18M1 11h20" fill="#f2f2f2" stroke="#555" stroke-width="1.500"/><circle cx="15" cy="15" r="4.500" fill="#fff" stroke="#444" stroke-width="1.500"/><path d="M18 18l5 5" stroke="#444" stroke-width="2.500"/></svg></button>
        <button class="fly" aria-label="全範囲ズーム"><svg viewBox="0 0 24 24"><path d="M0 5V0h5M19 0h5v5M0 19v5h5" fill="none" stroke="#333" stroke-width="1.500"/><path d="M5 8l3-4h11v12l-3 4H5z" fill="#6f9a63" stroke="#2f4a2a" stroke-width="1.500"/><path d="M5 8h11v12M16 8l3-4" fill="none" stroke="#cfe0c8"/></svg></button>
        <button class="fly" aria-label="全ビュー範囲ズーム"><svg viewBox="0 0 24 24"><path d="M6 1h17v18H6zM14 1v18M6 9h17" fill="#f2f2f2" stroke="#555" stroke-width="1.500"/><path d="M1 13l3-3h9v10l-3 3H1z" fill="#6f9a63" stroke="#2f4a2a" stroke-width="1.500"/></svg></button>
        <button aria-label="領域ズーム"><svg viewBox="0 0 24 24"><path d="M1 1h14v19H1z" fill="none" stroke="#333" stroke-dasharray="3 2"/><circle cx="16" cy="14" r="5" fill="#fff" stroke="#444" stroke-width="1.500"/><path d="M19 18l4 6" stroke="#444" stroke-width="2.500"/></svg></button>
        <button class="fly" aria-label="パン"><svg viewBox="0 0 24 24"><path d="M7 20L1 12c1-2 3-1 5 2L5 5c1-2 3-1 3 1l1 5 .5-9c1-2 3-1 3 0v9l2-8c1-2 3-1 3 1l-1 8 2-5c1-1 3-1 2 2l-3 11-3 3H9z" fill="#f8f8f8" stroke="#555" stroke-width="1.300"/></svg></button>
        <button class="fly" aria-label="オービット"><svg viewBox="0 0 24 24"><circle cx="12" cy="12" r="8" fill="#b7d3a8" stroke="#456"/><path d="M12 1v13h10M12 14L3 22" fill="none" stroke="#222" stroke-width="1.800"/><path d="M12 0l3 4H9zM24 14l-4 3v-6zM1 24l1-5 4 3z"/></svg></button>
        <button aria-label="最大化切り替え"><svg viewBox="0 0 24 24"><path d="M11 10h12v13H11z" fill="#fff" stroke="#555" stroke-width="1.500"/><path d="M1 1h16v16H1z" fill="#f2f2f2" stroke="#444" stroke-width="1.500"/><path d="M13 13L5 5M4 10V4h6" fill="none" stroke="#222" stroke-width="1.800"/></svg></button>
      </div>
    </footer>

    <!-- Callout arrows and circles -->
    <svg class="callouts" viewBox="28 390 4040 2134" fill="none" aria-hidden="true">
      <ellipse cx="3858" cy="1874" rx="188" ry="140" stroke="#e60012" stroke-width="7"/>
      <path d="M3171 1027L3668 1729" stroke="#e60012" stroke-width="6"/>
      <path d="M3693 1764Q3682 1730 3686 1699Q3662 1724 3634 1736Q3664 1744 3693 1764Z" fill="#e60012"/>
      <circle cx="3749" cy="1903" r="37" stroke="#eb6100" stroke-width="6"/>
      <path d="M3705 1917L860 2088" stroke="#eb6100" stroke-width="6"/>
      <path d="M816 2090Q848 2080 870 2059Q864 2086 874 2115Q848 2097 816 2090Z" fill="#eb6100"/>
      <path d="M2719 1734L2533 1858" stroke="#006934" stroke-width="6"/>
      <path d="M2498 1881Q2518 1853 2524 1822Q2539 1850 2563 1874Q2530 1870 2498 1881Z" fill="#006934"/>
    </svg>
  </main>

  <script>
    // Build the frame ruler: one tick per frame, a number on every fifth
    const ruler = document.getElementById('ruler');
    for (let frame = 0; frame <= 100; frame++) {
      const tick = document.createElement('span');
      tick.className = 'tick';
      if (frame % 5 === 0) {
        tick.classList.add('major');
        const label = document.createElement('b');
        label.textContent = frame;
        tick.appendChild(label);
      }
      ruler.appendChild(tick);
    }
  </script>
</body>
</html>
```

FILE: styles.css
```css
* {
  margin: 0;
  padding: 0;
  box-sizing: border-box;
}

body {
  min-height: 100vh;
  padding: 390px 28px;
  display: flex;
  background: #fff;
  color: #000;
  font-family: "Noto Sans", "Noto Sans CJK JP", sans-serif;
  font-size: 22px;
  line-height: 26px;
  font-feature-settings: "palt";
}

button, input, select {
  font: inherit;
  font-feature-settings: inherit;
  color: inherit;
  border: none;
  border-radius: 0;
  background: none;
}

svg {
  display: block;
}

.defs {
  position: absolute;
  width: 0;
  height: 0;
}

.app {
  position: relative;
  flex: 1;
  min-width: 0;
  display: flex;
  flex-direction: column;
  background: #f0f0f0;
}

/* Menu bar */
.menubar {
  height: 42px;
  display: flex;
  align-items: center;
  gap: 50px;
  background: linear-gradient(#f2f2f2, #b9b9b9);
  font-size: 26px;
  line-height: 36px;
  font-feature-settings: normal;
}

.menubar a {
  color: #1a1a1a;
  text-decoration: none;
  white-space: nowrap;
}

.app-button {
  width: 87px;
  height: 34px;
  margin-right: -23px;
  align-self: flex-start;
  display: flex;
  flex-direction: column;
  align-items: center;
  background: linear-gradient(#8d8d8d, #b5b5b5);
  border: 2px solid #111;
  border-top: none;
  font-size: 16px;
  font-weight: bold;
  line-height: 17px;
}

.app-button svg {
  width: 40px;
  height: 15px;
}

/* Toolbars */
.toolbars {
  height: 80px;
  display: flex;
  border-top: 2px solid #fff;
}

.toolbar {
  display: flex;
  align-items: flex-start;
  padding: 6px 4px 0 18px;
  border-right: 2px solid #8a8a8a;
  background: linear-gradient(#999, #999) 8px 6px / 2px 64px no-repeat,
              linear-gradient(#999, #999) 14px 6px / 2px 64px no-repeat;
}

.toolbar.axes {
  padding-right: 20px;
}

.toolbar.snaps {
  padding-right: 8px;
}

.tool {
  position: relative;
  width: 67px;
  height: 65px;
  display: flex;
  justify-content: center;
  padding-top: 7px;
}

.tool svg {
  width: 48px;
  height: 48px;
  overflow: visible;
}

.tool.on-green, .tool.on-gold {
  width: 65px;
  margin: 0 1px;
  padding-top: 5px;
  border-top: 3px solid #999;
  border-left: 2px solid #999;
  border-bottom: 3px solid #fff;
  background: #b9ffb9;
}

.tool.on-gold {
  background: #edc44c;
}

.fly {
  position: relative;
}

.fly::after {
  content: "";
  position: absolute;
  right: 4px;
  bottom: 2px;
  border: 3px solid;
  border-color: transparent #000 #000 transparent;
}

.tool.letter {
  font-size: 40px;
  font-weight: bold;
  line-height: 50px;
  color: #444;
}

.tool.xy {
  align-items: center;
  font-size: 26px;
  color: #333;
}

.g8 { font-size: 7px; font-weight: bold; }
.g12 { font-size: 13px; }
.g17 { font-size: 14px; fill: #444; }
.g20 { font-size: 18px; fill: #333; }

.sep {
  width: 2px;
  height: 42px;
  margin: 16px 6px 0;
  background: #9a9a9a;
}

.combo {
  appearance: none;
  width: 144px;
  height: 43px;
  padding: 0 30px 0 4px;
  border: 3px solid #fff;
  border-top-color: #777;
  border-left-color: #888;
  background: url("data:image/svg+xml,%3Csvg xmlns='http://www.w3.org/2000/svg' viewBox='0 0 16 10'%3E%3Cpath d='M0 1h16L8 10z'/%3E%3C/svg%3E") right 8px center / 17px 10px no-repeat, linear-gradient(#f4f4f4, #cfcfcf);
}

.toolbar .combo {
  line-height: 30px;
}

.toolbar .tool + .combo {
  margin: 0 2px;
}

.toolbar .combo.set {
  width: 252px;
  margin: 0;
  color: #999;
}

.combo.set, .combo.white {
  background-image: url("data:image/svg+xml,%3Csvg xmlns='http://www.w3.org/2000/svg' viewBox='0 0 16 10'%3E%3Cpath d='M0 1h16L8 10z'/%3E%3C/svg%3E");
  background-color: #fff;
}

/* Common controls */
.btn {
  border: 3px solid #fff;
  border-right-color: #9a9a9a;
  border-bottom-color: #9a9a9a;
  background: #f0f0f0;
  white-space: nowrap;
}

.btn:disabled, .off, input:disabled {
  color: #a3a3a3;
}

input[type="text"] {
  min-width: 0;
  height: 33px;
  padding: 0 6px;
  border: 3px solid #fff;
  border-top-color: #2a2a2a;
  border-left-color: #555;
  background: #fff;
}

input[type="checkbox"] {
  appearance: none;
  flex: none;
  width: 26px;
  height: 26px;
  border: 3px solid #fff;
  border-top-color: #777;
  border-left-color: #777;
  background-color: #fff;
}

input[type="checkbox"]:disabled {
  background-color: #f0f0f0;
}

input[type="checkbox"]:checked {
  background-image: url("data:image/svg+xml,%3Csvg xmlns='http://www.w3.org/2000/svg' viewBox='0 0 20 20'%3E%3Cpath d='M3 8l5 6 9-10' fill='none' stroke='black' stroke-width='4'/%3E%3C/svg%3E");
}

input[type="checkbox"]:checked:disabled {
  background-image: url("data:image/svg+xml,%3Csvg xmlns='http://www.w3.org/2000/svg' viewBox='0 0 20 20'%3E%3Cpath d='M3 8l5 6 9-10' fill='none' stroke='gray' stroke-width='4'/%3E%3C/svg%3E");
}

input[type="radio"] {
  appearance: none;
  flex: none;
  width: 22px;
  height: 22px;
  border: 3px solid #fff;
  border-top-color: #777;
  border-left-color: #777;
  border-radius: 50%;
  background: #fff;
}

input[type="radio"]:checked {
  background: radial-gradient(#000 5px, #fff 6px);
}

.spin {
  flex: none;
  width: 23px;
  height: 33px;
  display: flex;
  flex-direction: column;
  border: 2px solid #fff;
  border-right-color: #999;
  border-bottom-color: #999;
}

.spin button {
  flex: 1;
  display: flex;
  justify-content: center;
  align-items: center;
}

.spin button::before {
  content: "";
  border: 6px solid transparent;
  border-top-width: 0;
  border-bottom: 7px solid #000;
}

.spin button:last-child::before {
  border-bottom-width: 0;
  border-top: 7px solid #000;
}

fieldset {
  min-width: 0;
  border: 2px solid #9c9c9c;
}

legend {
  margin-left: 12px;
  padding: 0 6px;
  white-space: nowrap;
}

/* Workspace */
.workspace {
  flex: 1;
  display: flex;
  min-height: 0;
}

.layoutbar {
  width: 84px;
  display: flex;
  flex-direction: column;
  background: linear-gradient(90deg, #888, #727272 70%, #858585);
}

.grip {
  height: 23px;
  margin-bottom: auto;
  background: linear-gradient(#999, #999) 6px 10px / 70px 2px no-repeat, #f0f0f0;
}

.expand {
  width: 42px;
  height: 42px;
  margin: 0 0 22px 21px;
  display: flex;
  align-items: center;
  justify-content: center;
  background: #c6c6c6;
  border: 2px solid #555;
  border-radius: 6px;
}

.expand::before {
  content: "";
  border: 9px solid transparent;
  border-left: 8px solid #000;
  border-right-width: 0;
}

.layout-tab {
  height: 92px;
  margin: 0 0 4px 8px;
  border: 4px solid #b9c4cb;
  border-bottom: 16px solid #a5d5ee;
  border-right: none;
  border-top-width: 15px;
  border-radius: 8px 0 0 8px;
  background: linear-gradient(#9da1a4, #808588);
}

.center {
  flex: 1;
  min-width: 0;
  display: flex;
  flex-direction: column;
}

.viewport {
  position: relative;
  flex: 1;
  border: 5px solid #fff200;
  border-top: 7px solid #ebe45a;
  background: linear-gradient(#4b4b4b, #a0a0a0);
}

.scene {
  position: absolute;
  top: 0;
  left: 0;
  width: 100%;
}

.axis { font-size: 24px; }
.axis.red { fill: #c02c44; }
.axis.blue { fill: #2420c8; }
.axis.green { fill: #3f8f4f; }
.cube { font-size: 22px; fill: #70747c; }

.view-label {
  position: absolute;
  left: 8px;
  top: 7px;
  font-size: 24px;
  line-height: 30px;
  font-feature-settings: normal;
  color: #c4c4c4;
}

.note {
  position: absolute;
  font-family: "Noto Sans CJK JP", sans-serif;
  font-weight: 350;
  font-feature-settings: normal;
  white-space: nowrap;
}

.note.red {
  left: 1762px;
  top: 198px;
  font-size: 51px;
  line-height: 89px;
  color: #e60012;
}

.note.green {
  left: 2629px;
  top: 1156px;
  font-size: 54px;
  line-height: 97px;
  color: #006934;
}

.note.orange {
  left: 985px;
  top: 1312px;
  font-size: 54px;
  line-height: 97px;
  color: #eb6100;
}

/* Dialog */
.dialog {
  position: absolute;
  left: 87px;
  top: 986px;
  width: 547px;
  padding: 0 14px 12px 12px;
  border: 2px solid #39434e;
  border-radius: 8px;
  background: linear-gradient(#8794a5, #a7afba 12%, #c5cad1 29%, #64778c 31%, #6c8098);
}

.dialog header {
  height: 56px;
  display: flex;
  align-items: flex-start;
  gap: 11px;
}

.dialog .logo {
  width: 34px;
  height: 34px;
  margin-top: 10px;
}

.dialog h2 {
  padding-top: 8px;
  font-size: 25px;
  font-weight: normal;
  line-height: 34px;
  font-feature-settings: normal;
  white-space: nowrap;
}

.window-buttons {
  display: flex;
  margin-left: auto;
  border: 2px solid #3d4653;
  border-top: none;
  border-radius: 0 0 8px 8px;
  overflow: hidden;
}

.window-buttons button {
  width: 57px;
  height: 36px;
  display: flex;
  align-items: center;
  justify-content: center;
  background: linear-gradient(#a9b0bb, #7d8796 50%, #9aa3b0);
  border-right: 2px solid #4d5664;
}

.window-buttons .close {
  width: 98px;
  border: none;
  background: linear-gradient(#dd9a8c, #c2402a 50%, #cf5a40);
}

.window-buttons svg {
  width: 30px;
  height: 18px;
}

.client {
  padding: 14px 22px 16px 24px;
  border: 2px solid #2d3a48;
  background: #f0f0f0;
}

.pair {
  display: grid;
  grid-template-columns: 1fr 1fr;
  gap: 28px;
}

.pair .btn {
  height: 50px;
}

.btn.focus {
  outline: 2px dotted #000;
  outline-offset: -9px;
}

.params {
  margin: 7px -3px 0 0;
  padding: 3px 20px 14px 16px;
}

.param {
  height: 38px;
  display: flex;
  align-items: center;
}

.param label {
  flex: 1;
  display: flex;
  align-items: center;
  gap: 8px;
}

.param input[type="text"] {
  width: 131px;
  margin-right: 8px;
}

.param .spin {
  margin-right: 40px;
}

.param .spin:has(+ .lock) {
  margin-right: 4px;
}

.lock {
  width: 36px;
  height: 37px;
  padding: 4px 2px;
  border-top: 2px solid #999;
  border-left: 2px solid #999;
  background: #f2c94e;
}

.params .combo {
  width: 100%;
  margin-top: 11px;
}

.choices {
  height: 190px;
  margin-top: 17px;
  padding: 4px 0 12px 26px;
  display: flex;
  flex-direction: column;
}

.choices legend {
  margin-left: -18px;
}

.choices label {
  flex: 1;
  display: flex;
  align-items: center;
  gap: 12px;
}

.summary {
  display: block;
  margin-top: 14px;
  padding: 0 2px;
  border: 3px solid #fff;
  border-top-color: #888;
  border-left-color: #888;
  line-height: 27px;
  white-space: nowrap;
}

.summary + .pair {
  margin-top: 8px;
}

/* Time slider */
.time-slider {
  height: 38px;
  display: flex;
  background: #bdbdbd;
  font-size: 20px;
}

.time-slider button {
  height: 35px;
  background: #f0f0f0;
}

.step {
  width: 33px;
  border-right: 2px solid #888;
  border-bottom: 2px solid #888;
}

.thumb {
  width: 264px;
  border: 2px solid #fff;
  border-right: 3px solid #000;
  border-bottom: 4px solid #000;
}

.trackbar {
  height: 56px;
  display: flex;
  border-top: 2px solid #fff;
  border-bottom: 3px solid #fff;
}

.mini-curve {
  width: 110px;
  padding: 0 0 0 27px;
}

.mini-curve svg {
  width: 36px;
  height: 36px;
}

.track {
  flex: 1;
  margin-right: 106px;
  padding: 0 12px 0 9px;
  border-top: 2px solid #999;
  background: linear-gradient(90deg, #6e9fc0 18px, #c9c9c9 18px);
}

.ruler {
  height: 100%;
  display: flex;
  justify-content: space-between;
}

.tick {
  width: 0;
  display: flex;
  flex-direction: column;
  align-items: center;
}

.tick::before {
  content: "";
  flex: none;
  width: 2px;
  height: 24px;
  background: #777;
}

.tick.major::before {
  height: 54px;
  margin-bottom: -28px;
}

.tick b {
  font-size: 20px;
  font-weight: normal;
  line-height: 26px;
  color: #1c1c1c;
}

/* Command panel */
.panel {
  width: 385px;
  display: flex;
  flex-direction: column;
  border-bottom: 3px solid #9c9c9c;
}

.tabs {
  display: flex;
  gap: 2px;
  padding: 9px 0 0 5px;
  border-bottom: 2px solid #999;
}

.tabs button {
  width: 59px;
  height: 50px;
  display: flex;
  align-items: center;
  justify-content: center;
  border: 3px solid #999;
  border-bottom: none;
  border-radius: 6px 6px 0 0;
  background: #fff;
}

.tabs .active {
  background: #f0f0f0;
}

.tabs svg {
  width: 42px;
  height: 40px;
}

.panel-head {
  padding: 12px 12px 0 23px;
}

.name-row {
  display: flex;
  gap: 9px;
}

.name-row input[type="text"] {
  flex: 1;
  height: 40px;
  padding: 0 4px;
}

.swatch {
  width: 35px;
  height: 40px;
  background: linear-gradient(#000 18px, #fff 18px);
}

.panel-head .combo {
  width: 348px;
  height: 52px;
  margin: 12px 0 11px;
}

.modifier-buttons {
  display: grid;
  grid-template-columns: 151px 151px;
  gap: 4px 6px;
  padding-left: 12px;
}

.modifier-buttons .btn {
  height: 43px;
}

.stack {
  width: 341px;
  height: 266px;
  margin-top: 19px;
  padding: 2px;
  border: 3px solid #888;
  background: #fff;
  list-style: none;
}

.stack li {
  height: 32px;
  padding-left: 42px;
  background: #757575;
  line-height: 32px;
}

.stack-tools {
  height: 78px;
  padding: 10px 20px 0 0;
  display: flex;
  justify-content: space-between;
  align-items: flex-start;
}

.stack-tools button {
  width: 48px;
  height: 48px;
  padding: 10px 7px;
}

.stack-tools .pressed {
  border: 2px solid #fff;
  border-top-color: #999;
  border-left-color: #999;
  padding: 8px 5px;
}

.stack-tools i {
  width: 2px;
  height: 34px;
  margin-top: 6px;
  background: #aaa;
}

.stack-tools svg {
  width: 34px;
  height: 28px;
}

/* The list takes the height that is left and is cut there */
.rollups {
  flex: 1;
  contain: size;
  display: flex;
  margin: 4px 13px 12px 8px;
  border-top: 4px solid #000;
  overflow: hidden;
}

.rollup-list {
  flex: 1;
  min-width: 0;
  margin-top: 15px;
  padding: 26px 5px 0;
  border-top: 2px solid #999;
}

.scroll {
  flex: none;
  width: 8px;
  margin-top: 16px;
  background: linear-gradient(#9c9c9c 67%, #000 67%);
}

.rollup {
  margin-bottom: 30px;
  padding: 0 10px 20px 12px;
  border: 3px solid #9c9c9c;
  display: flex;
  flex-direction: column;
}

.rollup h3 {
  margin: -20px -6px 0 -6px;
  height: 33px;
  display: flex;
  justify-content: center;
  align-items: center;
  border: 3px solid #fff;
  border-right-color: #9a9a9a;
  border-bottom-color: #9a9a9a;
  background: #f0f0f0;
  font-size: 22px;
  font-weight: normal;
}

.rollup h3::before {
  content: "";
  width: 18px;
  height: 2px;
  margin: 0 118px 0 -136px;
  background: #000;
}

.path {
  width: 271px;
  height: 43px;
  margin: 12px 0 22px 24px;
}

.row {
  display: flex;
  align-items: center;
  justify-content: flex-end;
  white-space: nowrap;
}

.row input[type="text"] {
  width: 113px;
  margin: 0 6px 0 14px;
}

.row .combo {
  width: 140px;
  margin-left: 14px;
}

.row.a {
  padding-right: 30px;
}

.check {
  display: flex;
  align-items: center;
  gap: 10px;
  margin-bottom: 12px;
  white-space: nowrap;
}

.check.inset {
  margin: 13px 0 13px 56px;
}

.rollup fieldset {
  margin: 22px 0 0;
  padding: 5px 2px 11px 6px;
}

.rollup fieldset .row.b {
  padding-right: 30px;
}

.row.c {
  padding-right: 45px;
  margin-top: 12px;
}

.row.b + .row.c {
  margin-top: 7px;
}

.rollup .lower {
  padding: 10px 2px 7px;
  margin-bottom: 17px;
}

.lower .row:first-of-type {
  padding-right: 4px;
}

.lower .combo, .posts .combo {
  width: 137px;
}

.with-icon {
  display: flex;
  align-items: center;
  justify-content: space-between;
  margin-top: 12px;
}

.with-icon .row {
  margin-bottom: 15px;
}

.with-icon .row:last-child {
  margin-bottom: 0;
}

.with-icon .row:first-child {
  padding-right: 0;
}

.icon-btn {
  width: 50px;
  height: 50px;
  margin: 12px 0 0 16px;
  padding: 4px;
  border: 2px solid #fff;
  border-right-color: #999;
  border-bottom-color: #999;
  align-self: flex-start;
  flex: none;
}

.check:last-child {
  margin-bottom: 0;
}

.posts {
  padding: 0 4px 12px 12px;
}

.posts h3 {
  margin-right: 0;
  margin-bottom: 12px;
}

.posts .row .combo {
  margin-right: 6px;
}

.posts .with-icon {
  margin-top: 8px;
}

.posts .with-icon .row {
  margin-bottom: 11px;
}

.posts .with-icon .row:last-child {
  margin-bottom: 0;
}

.fence {
  margin-bottom: 0;
}

.fence .row.c {
  padding-right: 48px;
}

/* Status bar */
.status {
  height: 104px;
  display: flex;
}

.listener {
  width: 206px;
  padding: 5px 0 0 4px;
  display: flex;
  flex-direction: column;
  gap: 3px;
}

.status .listener input {
  height: 46px;
  padding: 0 9px;
  border-top-color: #777;
  border-left-color: #777;
}

.status .listener .pink {
  background: #dcc3c5;
}

.messages {
  flex: 1;
  min-width: 0;
  margin-left: 14px;
  padding: 9px 0 0 5px;
  border-left: 2px solid #999;
  display: flex;
  flex-direction: column;
  gap: 9px;
}

.line {
  flex: 1;
  display: flex;
}

.box {
  flex: 1;
  display: flex;
  align-items: center;
  padding-left: 9px;
  border: 3px solid #fff;
  border-top-color: #999;
  border-left-color: #999;
}

.box.side {
  flex: none;
  width: 207px;
  padding-left: 8px;
  margin-left: 32px;
}

.second .box.side {
  margin-left: 7px;
}

.second .box {
  border-bottom: none;
}

.glyphs {
  display: flex;
  margin-right: 7px;
}

.glyphs button {
  width: 56px;
  padding: 4px 12px;
}

.glyphs svg {
  width: 32px;
  height: 32px;
}

.coord {
  display: flex;
  align-items: center;
  justify-content: space-between;
  width: 158px;
}

.coord + .coord {
  margin-left: 29px;
}

.coord input[type="text"] {
  width: 120px;
  height: 43px;
}

.comm {
  width: 47px;
  margin-left: 6px;
  padding: 4px 8px;
  border-top: 3px solid #999;
  border-left: 3px solid #999;
  background: #edc44c;
}

.key {
  width: 90px;
  height: 92px;
  margin: 6px 8px 0 12px;
  padding: 0 17px;
}

.keys, .filters, .playback {
  display: flex;
  flex-direction: column;
  gap: 4px;
  padding-top: 6px;
}

.keys .btn {
  width: 134px;
  height: 44px;
}

.filters {
  width: 243px;
  margin: 0 8px 0 7px;
}

.filters .combo {
  width: 100%;
  height: 44px;
}

.filters div {
  display: flex;
  height: 44px;
}

.filters .btn {
  flex: 1;
}

.curve {
  width: 55px;
  padding: 2px 14px 0 4px;
}

.curve svg {
  width: 36px;
  height: 40px;
}

.playback div {
  height: 44px;
  display: flex;
  align-items: center;
}

.playback button {
  display: flex;
  justify-content: center;
}

.playback div > button {
  width: 49px;
  height: 38px;
  align-items: center;
}

.playback .end {
  width: 60px;
  border-right: 2px solid #999;
}

.playback .end:last-child {
  border-left: 2px solid #999;
}

.playback svg {
  width: 34px;
  height: 25px;
}

.playback input[type="text"] {
  width: 132px;
  height: 43px;
  margin: 0 2px;
}

.playback .time-config {
  width: 52px;
}

.playback .time-config svg {
  width: 36px;
  height: 34px;
}

.nav {
  display: grid;
  grid-template-columns: repeat(4, 49px);
  grid-auto-rows: 46px;
  padding: 8px 4px 0 0;
}

.nav button {
  display: flex;
  justify-content: center;
  padding-top: 5px;
}

.nav svg {
  width: 33px;
  height: 33px;
}

.callouts {
  position: absolute;
  top: 0;
  left: 0;
  width: 100%;
  pointer-events: none;
}
```
